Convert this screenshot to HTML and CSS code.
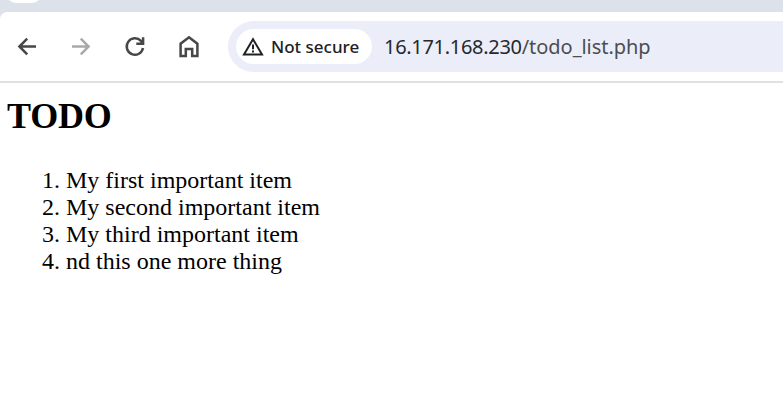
FILE: index.html
```html
<!DOCTYPE html>
<html lang="en">
<head>
<meta charset="utf-8">
<title>TODO</title>
<link rel="stylesheet" href="styles.css">
</head>
<body>
<div class="tabs"><div class="tab"></div></div>
<header class="toolbar">
  <nav class="nav">
    <svg class="icon" viewBox="0 0 24 24"><path d="M21 11.5H4.5M12.2 3.6L4.4 11.5l7.8 7.9"/></svg>
    <svg class="icon disabled" viewBox="0 0 24 24"><path d="M3 11.5h16.5M11.8 3.6l7.8 7.9-7.8 7.9"/></svg>
    <svg class="icon" viewBox="0 0 24 24"><path d="M20 13A8.2 8.2 0 1 1 17.9 5.9L20 8.1M20.1 2.2v6.6h-6.8"/></svg>
    <svg class="icon" viewBox="0 0 24 24"><path d="M3.6 21V8.7L12 2.3l8.4 6.4V21h-5.2v-7H8.8v7z"/></svg>
  </nav>
  <div class="address">
    <div class="chip">
      <svg class="warn" viewBox="0 0 22 20"><path d="M11 2.2L20 17.4H2z"/><path d="M11 7.5v4.8M11 13.4v2"/></svg>
      <span>Not secure</span>
    </div>
    <div class="url">16.171.168.230<span class="path">/todo_list.php</span></div>
  </div>
</header>
<main class="page">
  <h2>TODO</h2>
  <ol>
    <li>My first important item</li>
    <li>My second important item</li>
    <li>My third important item</li>
    <li>nd this one more thing</li>
  </ol>
</main>
</body>
</html>
```
FILE: styles.css
```css
* { box-sizing: border-box; }
body { margin: 0; background: #fff; overflow: hidden; }
.tabs { height: 20px; margin-bottom: -8px; background: #dde1e9; overflow: hidden; }
.tab { width: 36px; height: 20px; margin: -17px 0 0 6px; border-radius: 12px; background: #fff; }
.toolbar {
  position: relative;
  display: flex;
  align-items: center;
  height: 71px;
  border-bottom: 2px solid #dfe1e2;
  border-top-left-radius: 7px;
  background: #fff;
}
.nav { display: flex; gap: 30px; padding-left: 15px; }
.icon { width: 24px; height: 24px; fill: none; stroke: #474747; stroke-width: 2.5; }
.disabled { stroke: #a9a9a9; }
.address {
  display: flex;
  align-items: center;
  flex: 1;
  height: 51px;
  margin-left: 27px;
  padding-left: 8px;
  border-radius: 26px 0 0 26px;
  background: #ebeef8;
  font-family: "Noto Sans", sans-serif;
}
.chip {
  display: flex;
  align-items: center;
  gap: 7px;
  width: 136px;
  height: 35px;
  padding-left: 6px;
  border-radius: 18px;
  background: #fff;
  color: #202124;
  font-size: 17px;
  font-weight: 500;
  white-space: nowrap;
}
.warn { width: 22px; height: 20px; fill: none; stroke: #202124; stroke-width: 2; }
.url { margin-left: 12px; color: #27282b; font-size: 20px; letter-spacing: -0.3px; white-space: nowrap; }
.path { color: #4b4d52; letter-spacing: -0.05px; }
.page { padding-left: 7px; font: 24px/27px "Liberation Serif", serif; color: #000; }
h2 { margin: 13px 0 30px; font-size: 36px; line-height: 41px; letter-spacing: -0.2px; }
ol { margin: 0; padding-left: 59px; }
```
